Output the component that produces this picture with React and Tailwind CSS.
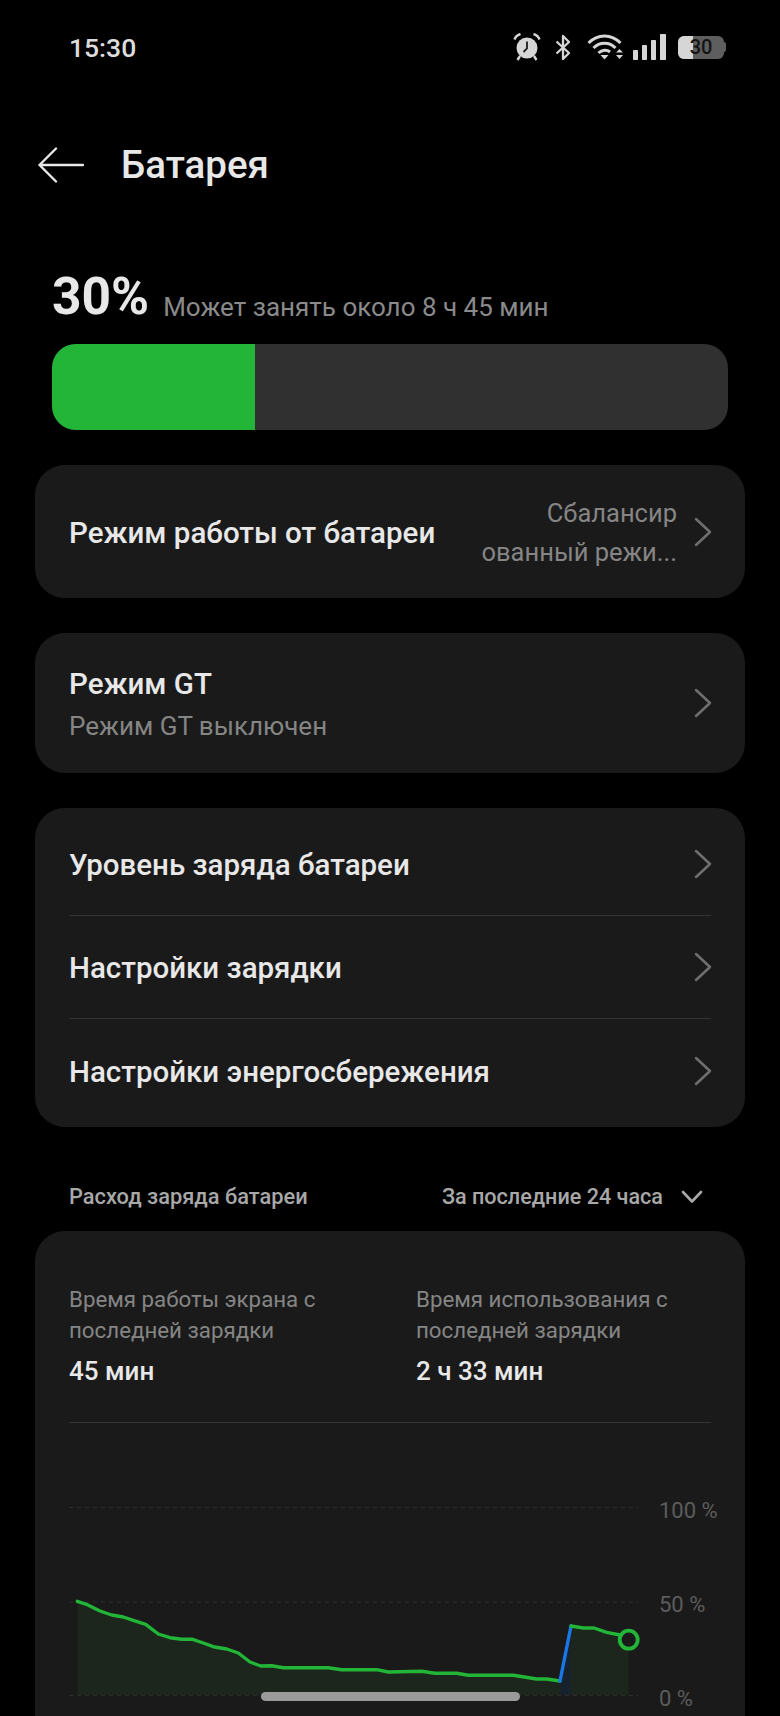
import React from 'react';

const FONT = "font-['Roboto','Noto_Sans',sans-serif]";

const dropLine = '77.3,1602.3 87.3,1605.7 100,1612 111.7,1616 123.3,1618 133.3,1621.3 145.7,1625.3 158.3,1635 170,1638.7 181.7,1640.3 192.7,1640.3 203.3,1644 213.3,1647.7 226.7,1650 238.3,1654 250,1663 260.7,1667 271.7,1666.7 283.3,1668.7 328.3,1668.7 341.7,1670.7 376.7,1670.7 388.3,1673 421.7,1672.3 435,1674.3 456.7,1674.3 468.3,1676.3 513.3,1676.3 536.7,1680 546.7,1680 560,1682';
const riseLine = '571,1627 583.3,1629 594,1629 606.7,1633.3 620,1636 628.7,1640.7';

function Chevron() {
  return (
    <svg width="18" height="30" viewBox="0 0 18 30" fill="none" className="shrink-0 translate-x-[1px]">
      <path d="M2 2 L16 15 L2 28" stroke="#6f6f6f" strokeWidth="2.5" strokeLinecap="round" strokeLinejoin="round" />
    </svg>
  );
}

function StatusIcons() {
  return (
    <div className="flex items-center">
      {/* alarm */}
      <svg width="28" height="28" viewBox="0 0 28 28" className="mr-[14px]">
        <circle cx="14" cy="15" r="10.5" fill="#d6d6d6" />
        <path d="M14 8.5 V15.5 L10.5 19" stroke="#1c1c1c" strokeWidth="1.8" fill="none" />
        <path d="M1.5 6.5 C2.5 3.5 4.5 1.8 7.5 1 M26.5 6.5 C25.5 3.5 23.5 1.8 20.5 1" stroke="#d6d6d6" strokeWidth="2.4" fill="none" />
        <path d="M7 23 L4.5 27 M21 23 L23.5 27" stroke="#d6d6d6" strokeWidth="2.4" />
      </svg>
      {/* bluetooth */}
      <svg width="16" height="27" viewBox="0 0 16 27" className="mr-[16px]">
        <path d="M1.5 7.5 L14 19 L8 25 V2 L14 8 L1.5 19.5" stroke="#d6d6d6" strokeWidth="2.3" fill="none" strokeLinejoin="round" />
      </svg>
      {/* wifi */}
      <svg width="37" height="26" viewBox="0 0 37 26" className="mr-[9px]">
        <path d="M1.5 9 C10.5 -0.5 24.5 -0.5 33.5 9" stroke="#d6d6d6" strokeWidth="3" fill="none" />
        <path d="M6.5 14 C12.5 7.5 22.5 7.5 28.5 14" stroke="#d6d6d6" strokeWidth="3" fill="none" />
        <path d="M11.5 19 C15 15.5 20 15.5 23 18" stroke="#d6d6d6" strokeWidth="3" fill="none" />
        <path d="M13.5 21 H21.5 L17.5 25.5 Z" fill="#d6d6d6" />
        <path d="M29 18.5 L32.5 15 L36 18.5 Z M29 21 H36 L32.5 25 Z" fill="#d6d6d6" />
      </svg>
      {/* signal */}
      <svg width="33" height="26" viewBox="0 0 33 26" className="mr-[12px]">
        <rect x="0" y="16" width="5" height="10" rx="0.8" fill="#d6d6d6" />
        <rect x="9" y="11" width="5" height="15" rx="0.8" fill="#d6d6d6" />
        <rect x="18" y="6" width="5" height="20" rx="0.8" fill="#d6d6d6" />
        <rect x="27" y="0" width="6" height="26" rx="0.8" fill="#d6d6d6" />
      </svg>
      {/* battery */}
      <div className="relative flex h-[23px] w-[46px] items-center overflow-hidden rounded-[6px] bg-[#5e5e5e]">
        <div className="h-full w-[15px] bg-[#d6d6d6]" />
        <span className="absolute inset-0 flex items-center justify-center text-[20px] leading-none font-medium text-[#141414]">30</span>
      </div>
      <div className="h-[10px] w-[2px] rounded-r-sm bg-[#5e5e5e]" />
    </div>
  );
}

function NavRow({ title }) {
  return (
    <div className="flex h-[103.5px] items-center justify-between">
      <span className="pt-[3px] text-[29.5px] font-medium text-[#e8e8e8]">{title}</span>
      <Chevron />
    </div>
  );
}

export default function App() {
  return (
    <div className={`${FONT} relative h-[1716px] w-[780px] overflow-hidden bg-black`}>
      {/* Status bar */}
      <div className="flex h-[94px] items-center justify-between pr-[54px] pl-[69px]">
        <span className="pt-[2px] text-[26.5px] font-medium text-[#dcdcdc]">15:30</span>
        <StatusIcons />
      </div>

      {/* Header */}
      <div className="flex h-[142px] items-center pl-[38px]">
        <svg width="46" height="36" viewBox="0 0 46 36" fill="none">
          <path d="M18 1.5 L1.5 18 L18 34.5 M1.5 18 H45" stroke="#e8e8e8" strokeWidth="2.4" strokeLinecap="round" strokeLinejoin="round" />
        </svg>
        <h1 className="ml-[37px] text-[38.5px] font-medium text-[#e8e8e8]">Батарея</h1>
      </div>

      {/* Battery level */}
      <div className="mt-[30px] flex h-[62px] items-end pl-[52px]">
        <span className="text-[51.5px] leading-[62px] font-bold text-[#e8e8e8]">30%</span>
        <span className="mb-[4px] ml-[14px] text-[26px] leading-[34px] text-[#8a8a8a]">Может занять около 8 ч 45 мин</span>
      </div>
      <div className="mx-[52px] mt-[16px] h-[86px] overflow-hidden rounded-[24px] bg-[#303030]">
        <div className="h-full w-[203px] bg-[#22b537]" />
      </div>

      <div className="mx-[35px] mt-[35px] flex flex-col gap-[35px]">
        <div className="flex h-[133px] items-center justify-between rounded-[30px] bg-[#1a1a1a] px-[34px]">
          <span className="pt-[3px] text-[29.5px] font-medium text-[#e8e8e8]">Режим работы от батареи</span>
          <div className="flex items-center gap-[16px]">
            <span className="pt-[3px] text-right text-[25.5px] leading-[39px] text-[#858585]">
              Сбалансир<br />ованный режи...
            </span>
            <Chevron />
          </div>
        </div>

        <div className="flex h-[140px] items-center justify-between rounded-[30px] bg-[#1a1a1a] px-[34px]">
          <div className="flex flex-col gap-[7px] pt-[3px]">
            <span className="text-[29.5px] leading-[36px] font-medium text-[#e8e8e8]">Режим GT</span>
            <span className="text-[26px] leading-[34px] text-[#858585]">Режим GT выключен</span>
          </div>
          <Chevron />
        </div>

        <div className="flex h-[319px] flex-col justify-center rounded-[30px] bg-[#1a1a1a] px-[34px]">
          <div className="divide-y divide-[#333333]">
            <NavRow title="Уровень заряда батареи" />
            <NavRow title="Настройки зарядки" />
            <NavRow title="Настройки энергосбережения" />
          </div>
        </div>
      </div>

      {/* Usage section */}
      <div className="mt-[54px] flex h-[32px] items-center justify-between pr-[77px] pl-[69px]">
        <span className="pt-[1px] text-[21.8px] font-medium text-[#a8a8a8]">Расход заряда батареи</span>
        <div className="flex items-center gap-[18px]">
          <span className="pt-[1px] text-[21.6px] font-medium text-[#a8a8a8]">За последние 24 часа</span>
          <svg width="22" height="14" viewBox="0 0 22 14" fill="none">
            <path d="M2 2 L11 11.5 L20 2" stroke="#a8a8a8" strokeWidth="2.6" strokeLinecap="round" strokeLinejoin="round" />
          </svg>
        </div>
      </div>

      <div className="mx-[35px] mt-[18px] h-[520px] rounded-t-[30px] bg-[#1a1a1a] px-[34px] pt-[53px]">
        <div className="flex h-[139px] border-b border-[#333333]">
          <div className="w-[347px]">
            <p className="text-[22.3px] leading-[31px] text-[#858585]">Время работы экрана с<br />последней зарядки</p>
            <p className="mt-[9px] text-[26px] leading-[32px] font-medium text-[#e8e8e8]">45 мин</p>
          </div>
          <div>
            <p className="text-[22.3px] leading-[31px] text-[#858585]">Время использования с<br />последней зарядки</p>
            <p className="mt-[9px] text-[26px] leading-[32px] font-medium text-[#e8e8e8]">2 ч 33 мин</p>
          </div>
        </div>

        {/* Chart */}
        <div className="mt-[76px] flex">
          <svg width="571" height="200" viewBox="69 1500 571 200" fill="none" className="shrink-0">
            <path d="M69 1508.5 H638 M69 1603 H638 M69 1696.5 H638" stroke="#2e2e2e" strokeWidth="1.2" strokeDasharray="4 4" />
            <polygon points={`${dropLine} 560,1696 77.3,1696`} fill="#1c261c" />
            <polygon points="560,1682 571,1627 571,1696 560,1696" fill="#18222c" />
            <polygon points={`${riseLine} 628.7,1696 571,1696`} fill="#1c261c" />
            <polyline points={dropLine} stroke="#22b537" strokeWidth="3.4" strokeLinejoin="round" strokeLinecap="round" />
            <polyline points="560,1682 571,1627" stroke="#1a78e6" strokeWidth="3.4" strokeLinecap="round" />
            <polyline points={riseLine} stroke="#22b537" strokeWidth="3.4" strokeLinejoin="round" strokeLinecap="round" />
            <circle cx="628.7" cy="1640.7" r="9" fill="#1a1a1a" stroke="#22b537" strokeWidth="3.8" />
          </svg>
          <div className="-mt-[2px] ml-[19px] flex h-[216px] flex-col justify-between text-[22px] leading-[28px] whitespace-nowrap text-[#5c5c5c]">
            <span>100 %</span>
            <span>50 %</span>
            <span>0 %</span>
          </div>
        </div>
      </div>

      {/* Gesture bar */}
      <div className="absolute bottom-[15px] left-[261px] h-[9px] w-[259px] rounded-full bg-[#9a9a9a]" />
    </div>
  );
}
